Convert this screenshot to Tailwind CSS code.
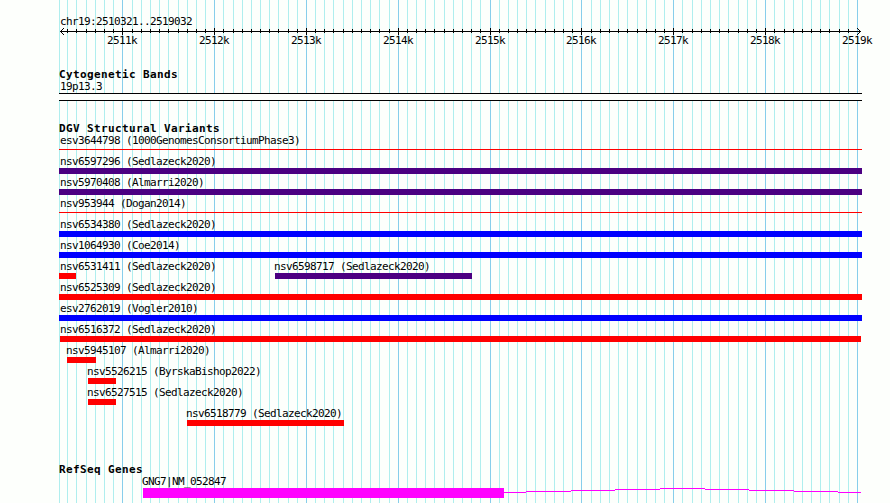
<!DOCTYPE html>
<html lang="en">
<head>
  <meta charset="UTF-8">
  <meta name="viewport" content="width=device-width, initial-scale=1.0">
  <title>chr19:2510321..2519032</title>
  <script src="https://cdn.jsdelivr.net/npm/@tailwindcss/browser@4"></script>
</head>
<body class="bg-[#fdfffc] text-black">
  <div class="relative w-[890px] h-[503px] overflow-hidden font-['DejaVu_Sans_Mono',monospace] text-[11px] leading-3 tracking-[-0.622px] whitespace-nowrap">
    <!-- Grid lines -->
    <svg class="absolute inset-0" width="890" height="503" shape-rendering="crispEdges" fill="none">
      <path id="grid-minor" stroke="#afeeee"/>
      <path id="grid-major" stroke="#87ceeb"/>
    </svg>

    <main class="relative flex flex-col pl-[59px] pt-4">
      <!-- Ruler -->
      <div class="h-3 pl-px">chr19:2510321..2519032</div>
      <svg class="-ml-[59px] h-[7px] w-[890px]" viewBox="0 28 890 7" shape-rendering="crispEdges" fill="none" stroke="#000">
        <path d="M60 31.5H861"/>
        <path id="ticks"/>
        <path d="M61 30.5h1M62 29.5h1M63 28.5h1M61 32.5h1M62 33.5h1M63 34.5h1M859 30.5h1M858 29.5h1M857 28.5h1M859 32.5h1M858 33.5h1M857 34.5h1"/>
      </svg>
      <div class="flex h-[34px] pl-12">
        <span class="w-[92px]">2511k</span>
        <span class="w-[92px]">2512k</span>
        <span class="w-[92px]">2513k</span>
        <span class="w-[92px]">2514k</span>
        <span class="w-[91px]">2515k</span>
        <span class="w-[92px]">2516k</span>
        <span class="w-[92px]">2517k</span>
        <span class="w-[92px]">2518k</span>
        <span>2519k</span>
      </div>

      <!-- Cytogenetic Bands -->
      <h2 class="h-3 font-bold tracking-[0.378px]">Cytogenetic Bands</h2>
      <div class="h-3 pl-px">19p13.3</div>
      <div class="h-2 w-[803px] border-y border-black bg-[#fdfffc]"></div>

      <!-- DGV Structural Variants -->
      <h2 class="mt-[22px] h-3 font-bold tracking-[0.378px]">DGV Structural Variants</h2>
      <div class="flex flex-col gap-[3px]">
        <div class="h-[18px]">
          <div class="h-3 pl-px">esv3644798 (1000GenomesConsortiumPhase3)</div>
          <div class="mt-[2px] h-px w-[803px] bg-[#ff0000]"></div>
        </div>
        <div class="h-[18px]">
          <div class="h-3 pl-px">nsv6597296 (Sedlazeck2020)</div>
          <div class="h-1.5 w-[803px] bg-[#4b0082]"></div>
        </div>
        <div class="h-[18px]">
          <div class="h-3 pl-px">nsv5970408 (Almarri2020)</div>
          <div class="h-1.5 w-[803px] bg-[#4b0082]"></div>
        </div>
        <div class="h-[18px]">
          <div class="h-3 pl-px">nsv953944 (Dogan2014)</div>
          <div class="mt-[2px] h-px w-[803px] bg-[#ff0000]"></div>
        </div>
        <div class="h-[18px]">
          <div class="h-3 pl-px">nsv6534380 (Sedlazeck2020)</div>
          <div class="h-1.5 w-[803px] bg-[#0000ff]"></div>
        </div>
        <div class="h-[18px]">
          <div class="h-3 pl-px">nsv1064930 (Coe2014)</div>
          <div class="h-1.5 w-[803px] bg-[#0000ff]"></div>
        </div>
        <div class="flex h-[18px]">
          <div class="w-[216px]">
            <div class="h-3 pl-px">nsv6531411 (Sedlazeck2020)</div>
            <div class="h-1.5 w-[17px] bg-[#ff0000]"></div>
          </div>
          <div>
            <div class="h-3 -ml-px">nsv6598717 (Sedlazeck2020)</div>
            <div class="h-1.5 w-[197px] bg-[#4b0082]"></div>
          </div>
        </div>
        <div class="h-[18px]">
          <div class="h-3 pl-px">nsv6525309 (Sedlazeck2020)</div>
          <div class="h-1.5 w-[803px] bg-[#ff0000]"></div>
        </div>
        <div class="h-[18px]">
          <div class="h-3 pl-px">esv2762019 (Vogler2010)</div>
          <div class="h-1.5 w-[803px] bg-[#0000ff]"></div>
        </div>
        <div class="h-[18px] pl-px">
          <div class="h-3">nsv6516372 (Sedlazeck2020)</div>
          <div class="h-1.5 w-[801px] bg-[#ff0000]"></div>
        </div>
        <div class="h-[18px] pl-2">
          <div class="h-3 -ml-px">nsv5945107 (Almarri2020)</div>
          <div class="h-1.5 w-[29px] bg-[#ff0000]"></div>
        </div>
        <div class="h-[18px] pl-[29px]">
          <div class="h-3 -ml-px">nsv5526215 (ByrskaBishop2022)</div>
          <div class="h-1.5 w-7 bg-[#ff0000]"></div>
        </div>
        <div class="h-[18px] pl-[29px]">
          <div class="h-3 -ml-px">nsv6527515 (Sedlazeck2020)</div>
          <div class="h-1.5 w-7 bg-[#ff0000]"></div>
        </div>
        <div class="h-[18px] pl-32">
          <div class="h-3 -ml-px">nsv6518779 (Sedlazeck2020)</div>
          <div class="h-1.5 w-[157px] bg-[#ff0000]"></div>
        </div>
      </div>

      <!-- RefSeq Genes -->
      <h2 class="mt-[38px] h-3 font-bold tracking-[0.378px]">RefSeq Genes</h2>
      <div class="h-3 pl-[83px]">GNG7|NM_052847</div>
      <div class="flex pl-[84px]">
        <div class="h-2.5 w-[361px] bg-[#ff00ff]"></div>
        <svg class="h-2.5 w-[357px]" viewBox="504 488 357 10" shape-rendering="crispEdges" fill="none" stroke="#ff00ff">
          <path d="M504 492.5H526M526 491.5H571M571 490.5H615M615 489.5H660M660 488.5H705M705 489.5H749M749 490.5H794M794 491.5H838M838 492.5H861"/>
        </svg>
      </div>
    </main>
  </div>

  <script>
    // one line per 100 bp, x in pixels
    const minor = [59, 67, 76, 86, 95, 104, 113, 132, 141, 150, 159, 168, 178, 187, 196, 205,
      223, 233, 242, 251, 260, 269, 278, 288, 297, 315, 324, 333, 343, 352, 361, 370, 379, 389,
      407, 416, 425, 434, 444, 453, 462, 471, 480, 499, 508, 517, 526, 535, 545, 554, 563, 572,
      591, 600, 609, 618, 627, 637, 646, 655, 664, 682, 692, 701, 710, 719, 728, 738, 747, 756,
      774, 784, 793, 802, 811, 820, 829, 839, 848];
    const major = [122, 214, 306, 398, 490, 581, 673, 765, 857];
    const lines = (xs, y1, y2) => xs.map(x => `M${x + 0.5} ${y1}V${y2}`).join('');

    document.getElementById('grid-minor').setAttribute('d', lines(minor, 0, 503));
    document.getElementById('grid-major').setAttribute('d', lines(major, 0, 503));
    document.getElementById('ticks').setAttribute('d', lines(minor.slice(1), 29, 33) + lines(major.slice(0, -1), 28, 35));
  </script>
</body>
</html>
